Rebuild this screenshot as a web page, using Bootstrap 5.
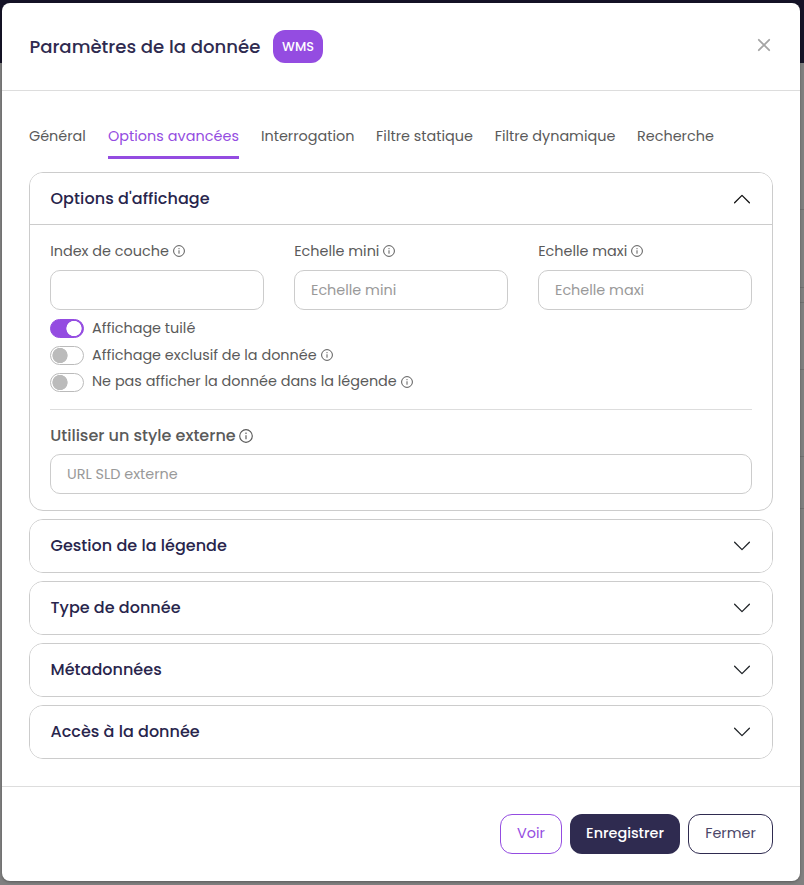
<!DOCTYPE html>
<html lang="fr">
<head>
<meta charset="utf-8">
<meta name="viewport" content="width=device-width, initial-scale=1">
<title>Paramètres de la donnée</title>
<link href="https://cdn.jsdelivr.net/npm/bootstrap@5.3.0/dist/css/bootstrap.min.css" rel="stylesheet">
<style>
:root{--violet:#944ce1;--navy:#2f2b50;--line:#ccc}
body{font-family:Poppins,Inter,sans-serif;font-size:14.4px;line-height:20px;color:#5a5a5a;height:885px;overflow:hidden;
 background:linear-gradient(#151327 63px,transparent 63px),
 linear-gradient(transparent 209px,#707070 209px 210px,transparent 210px 287px,#707070 287px 288px,transparent 288px 302px,#707070 302px 303px,transparent 303px 369px,#707070 369px 370px,transparent 370px 456px,#707070 456px 457px,transparent 457px 508px,#707070 508px 509px,transparent 509px) right/6px 100% no-repeat,#808080}
.page-dialog{margin:3px 4px 0 2px;height:878px;background:#fff;border-radius:8px;box-shadow:0 1px 3px rgba(0,0,0,.3);overflow:hidden}
.dialog-head{height:88px;padding:0 27px;border-bottom:1px solid #ddd}
.dialog-title{font-size:18.1px;font-weight:500;color:var(--navy);width:244px;padding-left:.4px;white-space:nowrap}
.tag{height:33px;width:50px;border-radius:12px;background:var(--violet);color:#fff;font-size:12.8px;font-weight:500}
.close-x{width:18px;height:18px;margin-bottom:3px}
.dialog-main{height:695px;padding:35px 27px 0}
.tabs{gap:22px;height:33px;margin-bottom:13px}
.tabs .nav-link{padding:0;color:#5a5a5a;white-space:nowrap;border-bottom:3px solid transparent;height:33px}
.tabs .nav-link.active{color:var(--violet);border-color:var(--violet);width:131px;letter-spacing:.04px}
.tabs .nav-link:nth-child(n+4){margin-left:-.3px}
.panels{gap:8px}
.panels .accordion-item,.panels .accordion-item:first-of-type,.panels .accordion-item:last-of-type{border:1px solid var(--line);border-radius:14px;overflow:hidden;color:#5a5a5a}
.panels .accordion-button{height:52px;padding:0 21px 0 20.5px;font-size:16px;font-weight:500;letter-spacing:.03px;color:#28254c!important;background:#fff!important;box-shadow:none!important}
.panels .accordion-button::after{display:none}
.panels .accordion-button.opened{height:51px;letter-spacing:.08px}
.chev{width:18px;height:18px}
.panels .accordion-body{padding:16px 20px;height:286px;border-top:1px solid var(--line)}
.fields{--bs-gutter-x:30px}
.fields .form-label,.ext-label{display:flex;align-items:center;gap:3.8px;margin:0 0 9px;height:20px;white-space:nowrap;padding-left:.2px}
.form-control{height:40px;border:1px solid var(--line);border-radius:10px;padding:0 16px;font-size:14.4px;color:#5a5a5a}
.form-control::placeholder{color:#999}
.switches{margin-top:5px}
.switches .form-check{min-height:0;height:27px;padding:0;margin:0;display:flex;align-items:center;gap:8px}
.switches .form-check-input{float:none;margin:0;width:34px;height:19px;flex:none;border:1px solid #bbb;
 background-color:#fff;background-image:radial-gradient(circle at 9px 8.5px,#bbb 7.3px,transparent 7.9px)!important;background-size:100% 100%;background-position:0 0!important}
.switches .form-check-input:checked{background-color:var(--violet);border-color:var(--violet);background-image:radial-gradient(circle at 23px 8.5px,#fff 7.3px,transparent 7.9px)!important}
.switches label{display:flex;align-items:center;gap:4px;margin-bottom:2px}
.switches .form-check:last-child label{margin-bottom:3px}
.switches .form-check:last-child .info{margin-top:2px}
.info{width:12px;height:12px;flex:none}
.rule{height:1px;background:#ddd;margin:13px 0 16px}
.panels .ext-label{font-size:16px;font-weight:500;margin-bottom:8px}
.ext-label .info{width:14px;height:14px}
.dialog-foot{height:95px;border-top:1px solid #ddd;padding:0 27px;gap:8px}
.dialog-foot .btn{height:40px;border-radius:12px;padding:0;font-size:14.4px}
.b-see{width:62px;color:var(--violet);border-color:var(--violet)}
.b-save{width:110px;background:var(--navy);color:#fff;font-weight:500}
.b-close{width:85px;color:#4a4668;border-color:var(--navy)}
</style>
</head>
<body>
<svg class="d-none">
<symbol id="i" viewBox="0 0 12 12"><circle cx="6" cy="6" r="5.4" fill="none" stroke="currentColor"/><path d="M6 5.3v3.4M6 3.1v1.1" stroke="currentColor"/></symbol>
<symbol id="down" viewBox="0 0 18 18"><path d="M1.6 5.2 9 12.6 16.4 5.2" fill="none" stroke="#212529" stroke-width="1.3" stroke-linecap="round" stroke-linejoin="round"/></symbol>
<symbol id="up" viewBox="0 0 18 18"><path d="M1.6 12.8 9 5.4 16.4 12.8" fill="none" stroke="#111" stroke-width="1.3" stroke-linecap="round" stroke-linejoin="round"/></symbol>
</svg>
<div class="page-dialog">
 <header class="dialog-head d-flex align-items-center">
  <div class="dialog-title">Paramètres de la donnée</div>
  <span class="tag d-flex align-items-center justify-content-center">WMS</span>
  <svg class="close-x ms-auto" viewBox="0 0 18 18"><path d="m3.8 3.8 10.4 10.4m0-10.4L3.8 14.2" stroke="#a5a5a5" stroke-width="1.8" stroke-linecap="round"/></svg>
 </header>
 <main class="dialog-main">
  <nav class="nav tabs flex-nowrap">
   <a class="nav-link">Général</a><a class="nav-link active">Options avancées</a><a class="nav-link">Interrogation</a><a class="nav-link">Filtre statique</a><a class="nav-link">Filtre dynamique</a><a class="nav-link">Recherche</a>
  </nav>
  <div class="accordion panels d-flex flex-column">
   <section class="accordion-item">
    <button class="accordion-button opened" type="button">Options d'affichage<svg class="chev ms-auto"><use href="#up"/></svg></button>
    <div class="accordion-body">
     <div class="row fields">
      <div class="col-4"><label class="form-label">Index de couche<svg class="info"><use href="#i"/></svg></label><input class="form-control"></div>
      <div class="col-4"><label class="form-label">Echelle mini<svg class="info"><use href="#i"/></svg></label><input class="form-control" placeholder="Echelle mini"></div>
      <div class="col-4"><label class="form-label">Echelle maxi<svg class="info"><use href="#i"/></svg></label><input class="form-control" placeholder="Echelle maxi"></div>
     </div>
     <div class="switches">
      <div class="form-check form-switch"><input id="s1" class="form-check-input" type="checkbox" checked><label for="s1">Affichage tuilé</label></div>
      <div class="form-check form-switch"><input id="s2" class="form-check-input" type="checkbox"><label for="s2">Affichage exclusif de la donnée<svg class="info"><use href="#i"/></svg></label></div>
      <div class="form-check form-switch"><input id="s3" class="form-check-input" type="checkbox"><label for="s3">Ne pas afficher la donnée dans la légende<svg class="info"><use href="#i"/></svg></label></div>
     </div>
     <div class="rule"></div>
     <label class="ext-label">Utiliser un style externe<svg class="info"><use href="#i"/></svg></label>
     <input class="form-control" placeholder="URL SLD externe">
    </div>
   </section>
   <section class="accordion-item"><button class="accordion-button" type="button">Gestion de la légende<svg class="chev ms-auto"><use href="#down"/></svg></button></section>
   <section class="accordion-item"><button class="accordion-button" type="button">Type de donnée<svg class="chev ms-auto"><use href="#down"/></svg></button></section>
   <section class="accordion-item"><button class="accordion-button" type="button">Métadonnées<svg class="chev ms-auto"><use href="#down"/></svg></button></section>
   <section class="accordion-item"><button class="accordion-button" type="button">Accès à la donnée<svg class="chev ms-auto"><use href="#down"/></svg></button></section>
  </div>
 </main>
 <footer class="dialog-foot d-flex align-items-center justify-content-end">
  <button class="btn b-see">Voir</button><button class="btn b-save">Enregistrer</button><button class="btn b-close">Fermer</button>
 </footer>
</div>
<script src="https://cdn.jsdelivr.net/npm/bootstrap@5.3.0/dist/js/bootstrap.bundle.min.js"></script>
</body>
</html>
